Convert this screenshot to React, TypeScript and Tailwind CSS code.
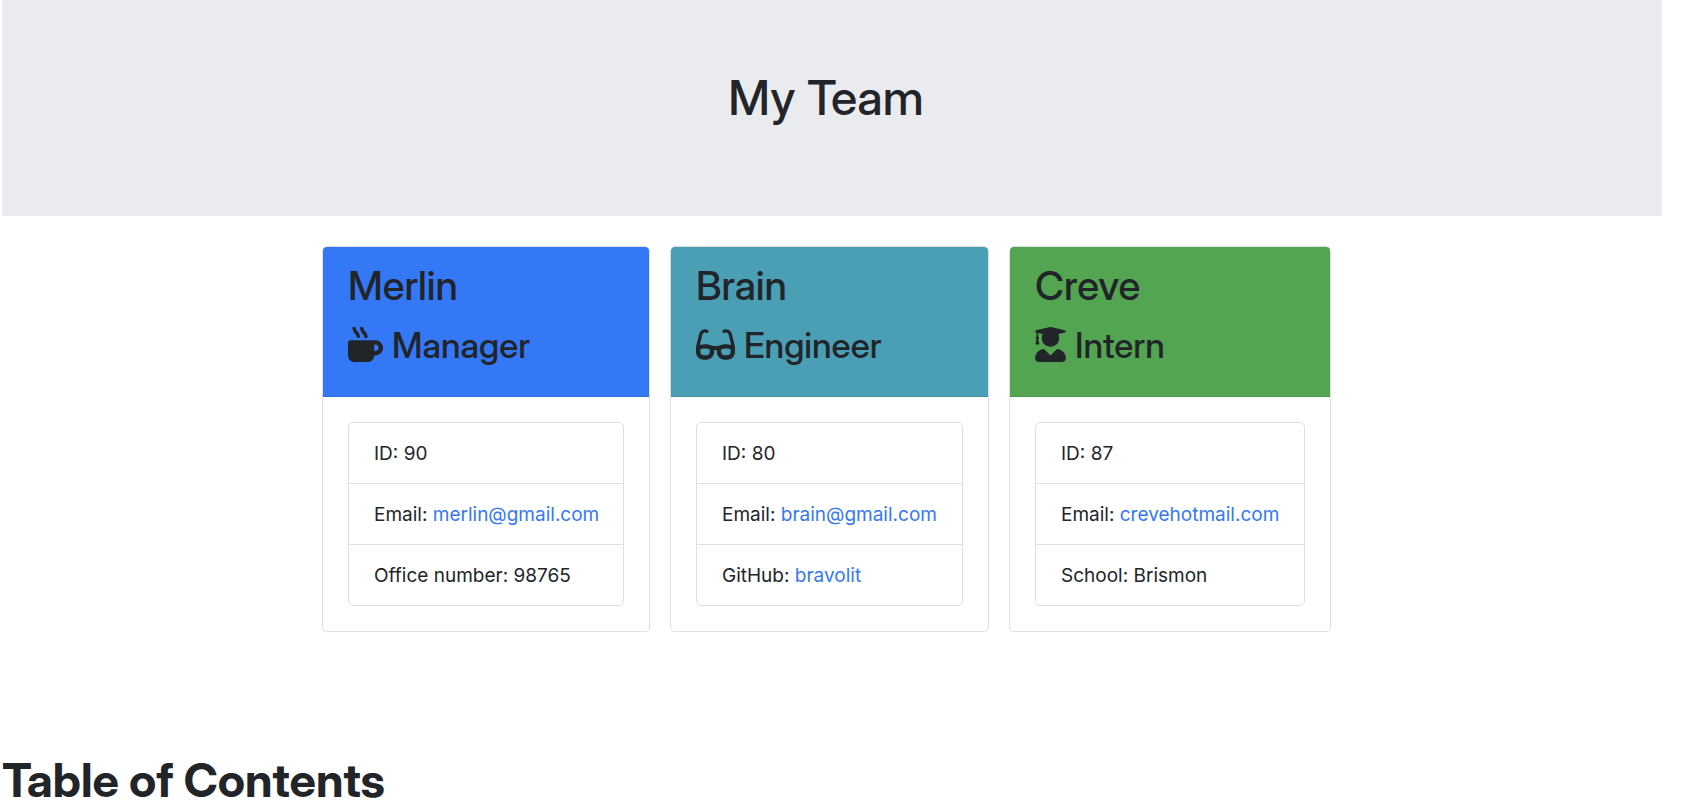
import type { ReactNode } from "react";
import { FaGlasses, FaMugHot, FaUserGraduate } from "react-icons/fa";

type Member = {
  name: string;
  role: string;
  icon: ReactNode;
  card: string;
  header: string;
  rows: { label: string; value: string; href?: string }[];
};

const team: Member[] = [
  {
    name: "Merlin",
    role: "Manager",
    icon: <FaMugHot className="h-[35px] w-[35px]" />,
    card: "w-[328px]",
    header: "bg-[#3478f6] border-[#2e6bdb]",
    rows: [
      { label: "ID", value: "90" },
      { label: "Email", value: "merlin@gmail.com", href: "mailto:merlin@gmail.com" },
      { label: "Office number", value: "98765" },
    ],
  },
  {
    name: "Brain",
    role: "Engineer",
    icon: <FaGlasses className="h-[35px] w-[39px]" />,
    card: "w-[319px]",
    header: "bg-[#4b9fb5] border-[#438ea1]",
    rows: [
      { label: "ID", value: "80" },
      { label: "Email", value: "brain@gmail.com", href: "mailto:brain@gmail.com" },
      { label: "GitHub", value: "bravolit", href: "https://github.com/bravolit" },
    ],
  },
  {
    name: "Creve",
    role: "Intern",
    icon: <FaUserGraduate className="h-[35px] w-[31px]" />,
    card: "w-[322px]",
    header: "bg-[#53a551] border-[#4a9348]",
    rows: [
      { label: "ID", value: "87" },
      { label: "Email", value: "crevehotmail.com", href: "mailto:crevehotmail.com" },
      { label: "School", value: "Brismon" },
    ],
  },
];

function MemberCard({ member }: { member: Member }) {
  return (
    <article className={`overflow-hidden rounded-[5px] border border-[#dfdfdf] bg-white ${member.card}`}>
      <header className={`border-b px-[25px] pt-[15px] pb-[26px] font-['Inter_Display','Inter','Liberation_Sans',sans-serif] ${member.header}`}>
        <h2 className="mb-[10px] text-[40px] leading-[48px] font-medium">{member.name}</h2>
        <h3 className="flex items-center gap-[9px] text-[35px] leading-[50px] font-medium">
          <span className="pb-[2px]">{member.icon}</span>
          {member.role}
        </h3>
      </header>
      <div className="p-[25px]">
        <ul className="divide-y divide-[#dfdfdf] rounded-[5px] border border-[#dfdfdf]">
          {member.rows.map((row) => (
            <li key={row.label} className="px-[25px] pt-[16px] pb-[14px] text-[19px] leading-[30px] whitespace-nowrap">
              {row.label}:{" "}
              {row.href ? (
                <a href={row.href} className="text-[#3478f6] hover:underline">
                  {row.value}
                </a>
              ) : (
                row.value
              )}
            </li>
          ))}
        </ul>
      </div>
    </article>
  );
}

export default function App() {
  return (
    <div className="bg-white pl-[2px] font-['Inter','Liberation_Sans',sans-serif] text-[#212529]">
      <div className="mr-[26px] bg-[#eaebef] pt-[68px] pb-[88px] pr-[12px] text-center">
        <h1 className="font-['Inter_Display','Inter','Liberation_Sans',sans-serif] text-[48px] leading-[60px] font-medium">My Team</h1>
      </div>
      <main className="mr-[37px] flex flex-wrap justify-center gap-5 pt-[30px]">
        {team.map((member) => (
          <MemberCard key={member.name} member={member} />
        ))}
      </main>
      <h1 className="mt-[128px] font-['Inter_Display','Inter','Liberation_Sans',sans-serif] text-[47px] leading-[40px] font-bold">Table of Contents</h1>
    </div>
  );
}
